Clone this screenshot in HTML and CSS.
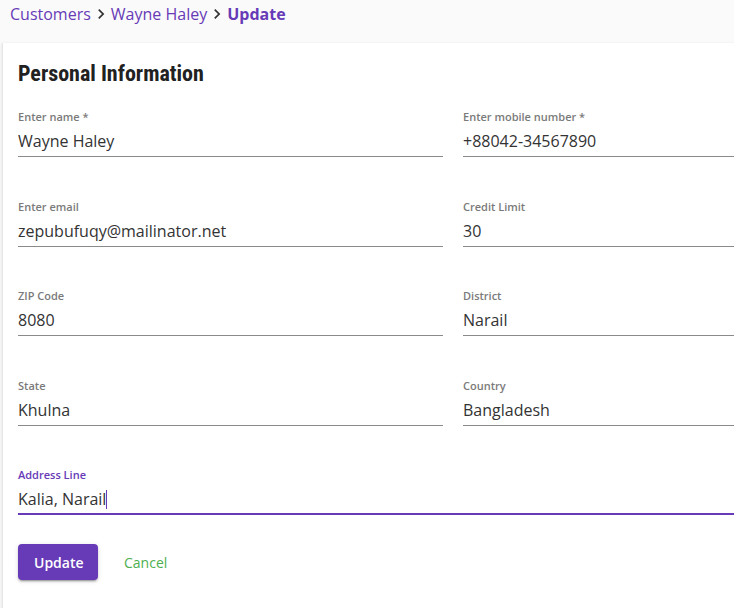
FILE: index.html
```html
<!DOCTYPE html>
<html>
<head>
<meta charset="utf-8">
<link rel="stylesheet" href="styles.css">
</head>
<body>
<nav class="crumbs">
  <span class="crumb">Customers</span>
  <svg class="chev" viewBox="0 0 24 24" width="20" height="20"><path d="M8.59 16.59L13.17 12 8.59 7.41 10 6l6 6-6 6z"/></svg>
  <span class="crumb">Wayne Haley</span>
  <svg class="chev" viewBox="0 0 24 24" width="20" height="20"><path d="M8.59 16.59L13.17 12 8.59 7.41 10 6l6 6-6 6z"/></svg>
  <span class="crumb current">Update</span>
</nav>
<main class="card">
  <h2 class="title">Personal Information</h2>
  <div class="grid">
    <div class="field"><div class="label">Enter name *</div><div class="input">Wayne Haley</div></div>
    <div class="field"><div class="label">Enter mobile number *</div><div class="input">+88042-34567890</div></div>
    <div class="field"><div class="label">Enter email</div><div class="input">zepubufuqy@mailinator.net</div></div>
    <div class="field"><div class="label">Credit Limit</div><div class="input">30</div></div>
    <div class="field"><div class="label">ZIP Code</div><div class="input">8080</div></div>
    <div class="field"><div class="label">District</div><div class="input">Narail</div></div>
    <div class="field"><div class="label">State</div><div class="input">Khulna</div></div>
    <div class="field"><div class="label">Country</div><div class="input">Bangladesh</div></div>
    <div class="field full focused"><div class="label">Address Line</div><div class="input">Kalia, Narail<span class="caret"></span></div></div>
  </div>
  <div class="actions">
    <button class="btn primary">Update</button>
    <button class="btn link">Cancel</button>
  </div>
</main>
</body>
</html>
```
FILE: styles.css
```css
html, body {
  margin: 0;
  padding: 0;
  overflow: hidden;
}
body {
  background: #fafafa;
  font-family: "Open Sans", "Noto Sans", sans-serif;
  color: #333;
  width: 734px;
  height: 608px;
}
.crumbs {
  display: flex;
  align-items: center;
  height: 28px;
  padding-left: 10px;
  font-size: 16px;
  color: #673ab7;
}
.chev {
  fill: #333;
  flex: none;
}
.crumb.current {
  font-weight: 700;
}
.card {
  margin-top: 15px;
  margin-left: 2px;
  width: 904px;
  min-height: 600px;
  box-sizing: border-box;
  background: #fff;
  border-left: 1px solid #e6e6e6;
  box-shadow: 0 1px 3px rgba(0,0,0,0.12);
  padding: 18px 15px 20px;
}
.title {
  margin: 0;
  font-family: "Roboto Condensed", "Liberation Sans Narrow", Roboto, sans-serif;
  font-stretch: condensed;
  font-weight: 700;
  font-size: 22px;
  line-height: 26px;
  color: #212121;
}
.grid {
  display: grid;
  grid-template-columns: 425px 425px;
  column-gap: 20px;
  row-gap: 41.5px;
  margin-top: 22px;
}
.field.full {
  grid-column: 1 / -1;
}
.label {
  font-size: 11px;
  font-weight: 600;
  line-height: 16px;
  color: #7a7a7a;
}
.input {
  font-size: 16px;
  line-height: 24px;
  padding-top: 4px;
  padding-bottom: 3px;
  border-bottom: 1px solid #8a8a8a;
  color: #333;
  white-space: nowrap;
}
.focused .label {
  color: #673ab7;
}
.focused .input {
  border-bottom: 2px solid #673ab7;
  padding-bottom: 2px;
}
.caret {
  display: inline-block;
  width: 1px;
  height: 19px;
  background: #673ab7;
  vertical-align: -4px;
}
.actions {
  display: flex;
  align-items: center;
  gap: 8px;
  margin-top: 29px;
}
.btn {
  font-family: "Open Sans", sans-serif;
  font-size: 14px;
  height: 36px;
  border: none;
  border-radius: 4px;
  padding: 0 16px;
  cursor: pointer;
  background: transparent;
}
.btn.primary {
  background: #673ab7;
  color: #fff;
  font-weight: 600;
  width: 80px;
  box-shadow: 0 3px 1px -2px rgba(0,0,0,.2), 0 2px 2px 0 rgba(0,0,0,.14), 0 1px 5px 0 rgba(0,0,0,.12);
}
.btn.link {
  color: #4caf50;
  padding: 0 18px;
}
```
